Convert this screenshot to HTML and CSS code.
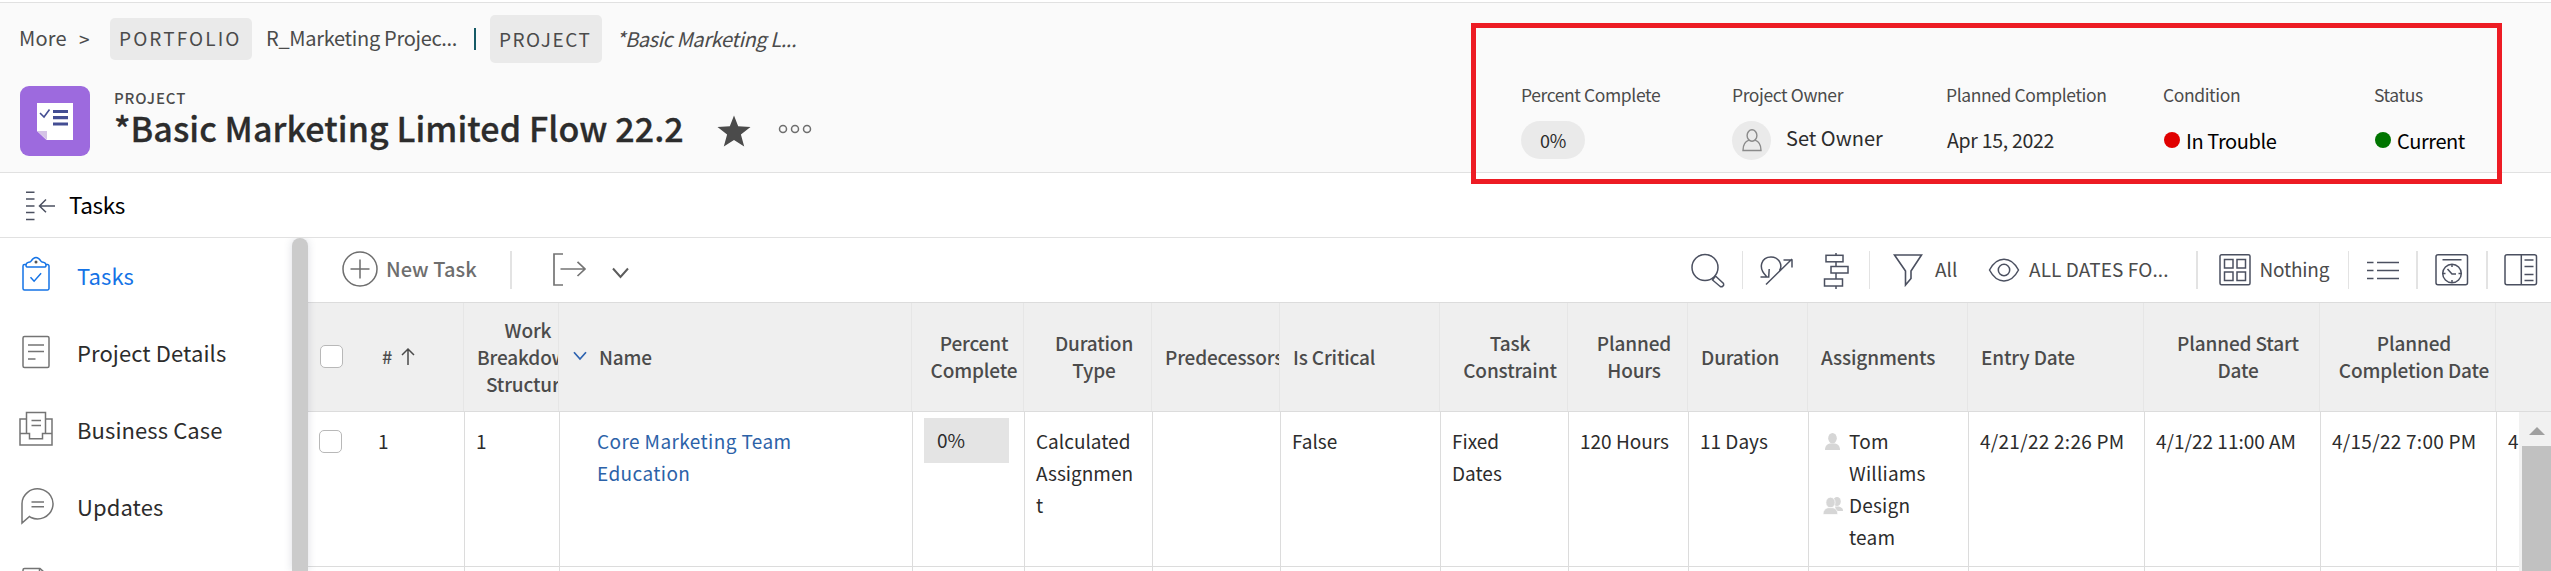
FILE: index.html
```html
<!DOCTYPE html>
<html lang="en">
<head>
<meta charset="utf-8">
<title>Tasks</title>
<link rel="stylesheet" href="styles.css">
</head>
<body>
<header class="header">
  <div class="lead">
    <nav class="crumbs">
      <span class="more">More</span><span class="gt">&gt;</span>
      <span class="pill">PORTFOLIO</span><span class="crumb">R_Marketing Projec...</span>
      <span class="bar"></span>
      <span class="pill tall">PROJECT</span><span class="crumb current">*Basic Marketing L...</span>
    </nav>
    <div class="titlebar">
      <svg class="logo" width="70" height="70" viewBox="0 0 70 70"><rect width="70" height="70" rx="9" fill="#9d6ade"/><path d="M17 17h36v37H26.500L17 45z" fill="#fff"/><path d="M17 45h10v9z" fill="#d5c3e6"/><path d="M20 27l4 4 5.500-7.500" fill="none" stroke="#444e93" stroke-width="1.600"/><path d="M33 25.500h15M33 31.700h15M33 38h15" stroke="#444e93" stroke-width="3.200"/></svg>
      <div class="names"><div class="kind">PROJECT</div><h1>*Basic Marketing Limited Flow 22.2</h1></div>
      <svg class="star" width="34" height="32" viewBox="0 0 34 32"><path d="M17 .5l4.200 10.800 12.300.6-9.600 7.700 3.300 11.800L17 25 6.800 31.400l3.300-11.800L.5 11.900l12.300-.6z" fill="#4b4b4b"/></svg>
      <svg class="dots" width="34" height="10" viewBox="0 0 34 10" fill="none" stroke="#6e6e6e" stroke-width="1.500"><circle cx="5" cy="5" r="3.500"/><circle cx="17" cy="5" r="3.500"/><circle cx="29" cy="5" r="3.500"/></svg>
    </div>
  </div>
  <div class="facts">
    <div><div class="label">Percent Complete</div><div class="value"><span class="pct">0%</span></div></div>
    <div><div class="label">Project Owner</div><div class="value"><span class="avatar"><svg width="20" height="23" viewBox="0 0 20 23" fill="none" stroke="#8a8a8a" stroke-width="1.400"><ellipse cx="10" cy="6.500" rx="4.900" ry="5.700"/><path d="M7 11.200C3 12.500 1 17 1 21.500h18c0-4.500-2-9-6-10.300"/></svg></span><span class="owner">Set Owner</span></div></div>
    <div><div class="label">Planned Completion</div><div class="value date">Apr 15, 2022</div></div>
    <div><div class="label">Condition</div><div class="value state"><i class="dot red"></i><span>In Trouble</span></div></div>
    <div><div class="label">Status</div><div class="value state"><i class="dot green"></i><span>Current</span></div></div>
  </div>
  <div class="highlight"></div>
</header>

<div class="section">
  <svg width="32" height="30" viewBox="0 0 32 30" fill="none" stroke="#4b5060" stroke-width="1.500"><path d="M1 1.200h8.500M1 8h8.500M1 15h8.500M1 21.500h8.500M1 28.500h8.500M14.500 15h15.500M21 8.500l-6.500 6.500 6.500 6.200"/></svg>
  <span>Tasks</span>
</div>

<div class="body">
  <aside class="side">
    <div class="item active"><svg width="36" height="36" viewBox="0 0 36 36" fill="none" stroke="#1473e6" stroke-width="1.500"><path d="M8 8.500H6.500a1.500 1.500 0 0 0-1.500 1.500v22.500A1.500 1.500 0 0 0 6.500 34h23a1.500 1.500 0 0 0 1.500-1.500V10a1.500 1.500 0 0 0-1.500-1.500H28M8 9.500c0-3 2-3.200 4-3.400 1.500 0 1.800-4.600 6-4.600s4.500 4.600 6 4.600c2 .2 4 .4 4 3.400 0 1-1 1.600-2 1.600H10c-1 0-2-.6-2-1.600zM12.500 21.200l3.600 4 7-8"/><circle cx="18" cy="6" r="1.500" fill="#555" stroke="none"/></svg><span>Tasks</span></div>
    <div class="item"><svg width="36" height="36" viewBox="0 0 36 36" fill="none" stroke="#747474" stroke-width="1.500"><rect x="5" y="2.500" width="26" height="31" rx="1.500"/><path d="M10 11h16M10 17.500h16M10 25h7.500"/></svg><span>Project Details</span></div>
    <div class="item"><svg width="36" height="36" viewBox="0 0 36 36" fill="none" stroke="#747474" stroke-width="1.500"><path d="M8.500 22.500V1.500h19v21M8.500 8H2v26h32V8h-6.500M2 22.500h9.500v5.300h13v-5.300H34M13.500 9.500H23M13.500 14.500H23"/></svg><span>Business Case</span></div>
    <div class="item"><svg width="36" height="36" viewBox="0 0 36 36" fill="none" stroke="#747474" stroke-width="1.500"><path d="M4 35V15.500a15.500 15 0 1 1 9 14L11.500 28.500zM13.500 14h12.500M13.500 18.700h12.500"/></svg><span>Updates</span></div>
    <div class="item cut"><svg width="36" height="12" viewBox="0 0 36 12" fill="none" stroke="#747474" stroke-width="1.500"><path d="M5 12V4a1.500 1.500 0 0 1 1.500-1.500H22l9 8V12"/><path d="M21.500 2.500v9H31"/></svg></div>
  </aside>
  <div class="scroll"></div>
  <main class="main">
    <div class="toolbar">
      <svg class="i-new" width="36" height="36" viewBox="0 0 36 36" fill="none" stroke="#6e6e6e" stroke-width="1.500"><circle cx="18" cy="18" r="17"/><path d="M18 8.500v19M8.500 18h19"/></svg>
      <span class="new">New Task</span>
      <i class="sep s1"></i>
      <svg class="i-exp" width="33" height="36" viewBox="0 0 33 36" fill="none" stroke="#747474" stroke-width="1.700"><path d="M10 2H1v31h9M7.500 17H32M24.500 9.800L32 17l-7.500 7"/></svg>
      <svg class="i-chev" width="17" height="12" viewBox="0 0 17 12" fill="none" stroke="#5c5c5c" stroke-width="2"><path d="M1 1.500l7.500 8.500L16 1.500"/></svg>
      <svg class="i-search" width="36" height="36" viewBox="0 0 36 36" fill="none" stroke="#4b5060" stroke-width="1.500"><circle cx="15" cy="15.500" r="13"/><path d="M22.500 28l3-4 8 7.500c1 2-1.500 4-3.300 3z"/></svg>
      <i class="sep s2"></i>
      <svg class="i-recalc" width="36" height="36" viewBox="0 0 36 36" fill="none" stroke="#4b5060" stroke-width="1.500"><path d="M7 31.500L33 6M24.500 7H33v7.500M20.500 17.700C24 12 20 4 12 4 3 4-2 14 7.500 23.500M1.500 24h8.200l.5-8"/></svg>
      <svg class="i-gantt" width="26" height="36" viewBox="0 0 26 36" fill="none" stroke="#4b5060" stroke-width="1.500"><path d="M13 0v2.500M13 8.500v5M13 20v6M13 33v3"/><rect x="3" y="2.300" width="17" height="6.500"/><rect x="8" y="13.500" width="17" height="6.500"/><rect x="1.500" y="26" width="18" height="7"/></svg>
      <i class="sep s3"></i>
      <svg class="i-filter" width="30" height="36" viewBox="0 0 30 36" fill="none" stroke="#4b5060" stroke-width="1.600"><path d="M1.500 3h27L18 19v7.500l-5.500 6.500V19z"/></svg>
      <span class="t-all">All</span>
      <svg class="i-eye" width="32" height="36" viewBox="0 0 32 36" fill="none" stroke="#4b5060" stroke-width="1.500"><path d="M1.500 18C9 3.500 23 3.500 30.500 18 23 32.500 9 32.500 1.500 18z"/><circle cx="16" cy="18" r="5.700"/></svg>
      <span class="t-dates">ALL DATES FO...</span>
      <i class="sep s4"></i>
      <svg class="i-grid" width="32" height="36" viewBox="0 0 32 36" fill="none" stroke="#4b5060" stroke-width="1.500"><rect x="1" y="2.800" width="30" height="30" rx="1.500"/><path d="M5.500 7.500h8.500v8.500H5.500zM18 7.500h8.500v8.500H18zM5.500 20h8.500v8.500H5.500zM18 20h8.500v8.500H18z"/></svg>
      <span class="t-nothing">Nothing</span>
      <i class="sep s5"></i>
      <svg class="i-list" width="32" height="36" viewBox="0 0 32 36" fill="none" stroke="#4b5060" stroke-width="1.500"><path d="M0 10.500h6.500M10 10.500h22M0 18.500h6.500M10 18.500h22M0 26.500h6.500M10 26.500h22"/></svg>
      <i class="sep s6"></i>
      <svg class="i-clock" width="34" height="36" viewBox="0 0 34 36" fill="none" stroke="#4b5060" stroke-width="1.500"><rect x="1" y="2.800" width="31.500" height="30" rx="2"/><path d="M7.500 7.800h19M12.500 17l4.500 5h4M17 12v3M17 28v3M7.500 21.500h3M23.500 21.500h3"/><circle cx="17" cy="21.500" r="9.300"/></svg>
      <i class="sep s7"></i>
      <svg class="i-panel" width="34" height="36" viewBox="0 0 34 36" fill="none" stroke="#4b5060" stroke-width="1.500"><rect x="1" y="2.800" width="31.500" height="30" rx="2"/><path d="M17.300 3v30M20.500 8h9M20.500 14.500h9M20.500 22.500h9M20.500 28.500h9"/></svg>
    </div>

    <div class="grid head">
      <div class="c numcell"><span class="check"></span><span class="hash">#</span><svg width="14" height="17" viewBox="0 0 14 17" fill="none" stroke="#4b4b4b" stroke-width="1.500"><path d="M7 17V1.200M1 7l6-6 6 6"/></svg></div>
      <div class="c mid wbs">Work<br>Breakdown<br>Structure</div>
      <div class="c name"><svg width="14" height="10" viewBox="0 0 14 10" fill="none" stroke="#2c62b0" stroke-width="1.700"><path d="M1 1.200l6 6.800 6-6.800"/></svg>Name</div>
      <div class="c mid">Percent<br>Complete</div>
      <div class="c mid">Duration<br>Type</div>
      <div class="c">Predecessors</div>
      <div class="c">Is Critical</div>
      <div class="c mid">Task<br>Constraint</div>
      <div class="c mid">Planned<br>Hours</div>
      <div class="c">Duration</div>
      <div class="c">Assignments</div>
      <div class="c">Entry Date</div>
      <div class="c mid">Planned Start<br>Date</div>
      <div class="c mid">Planned<br>Completion Date</div>
      <div class="c last"></div>
    </div>

    <div class="rows">
      <div class="grid row">
        <div class="c numcell"><span class="check"></span><span class="num">1</span></div>
        <div class="c">1</div>
        <div class="c link">Core Marketing Team<br>Education</div>
        <div class="c box"><span class="progress">0%</span></div>
        <div class="c">Calculated<br>Assignmen<br>t</div>
        <div class="c"></div>
        <div class="c">False</div>
        <div class="c">Fixed<br>Dates</div>
        <div class="c">120 Hours</div>
        <div class="c">11 Days</div>
        <div class="c people">
          <div class="person"><svg width="20" height="17" viewBox="0 0 20 17" fill="#d6d6d6"><ellipse cx="9.500" cy="5.300" rx="4.300" ry="5.300"/><path d="M2 17c0-4 2-5.800 5-6.500h5c3 .7 5 2.500 5 6.500z"/></svg><span>Tom<br>Williams</span></div>
          <div class="person"><svg width="20" height="17" viewBox="0 0 20 17" fill="#d6d6d6"><ellipse cx="14" cy="4.500" rx="3.800" ry="4.500"/><path d="M12 9.500h4c3 1 4 2 4 4.500h-7z"/><g stroke="#fff" stroke-width=".7"><ellipse cx="7.500" cy="5.500" rx="4.600" ry="5.300"/><path d="M0 17.500c0-4 2-6 5-6.800h5c3 .8 4.800 2.800 4.800 6.800z"/></g></svg><span>Design<br>team</span></div>
        </div>
        <div class="c d1">4/21/22 2:26 PM</div>
        <div class="c">4/1/22 11:00 AM</div>
        <div class="c d1">4/15/22 7:00 PM</div>
        <div class="c last">4</div>
      </div>
      <div class="grid row next"><div class="c"></div><div class="c"></div><div class="c"></div><div class="c"></div><div class="c"></div><div class="c"></div><div class="c"></div><div class="c"></div><div class="c"></div><div class="c"></div><div class="c"></div><div class="c"></div><div class="c"></div><div class="c"></div><div class="c last"></div></div>
      <div class="vscroll"><i class="up"></i><i class="thumb"></i></div>
    </div>
  </main>
</div>
</body>
</html>
```
FILE: styles.css
```css
*{box-sizing:border-box}
body{margin:0;width:2551px;height:571px;overflow:hidden;background:#fff;color:#2c2c2c;font:19px/32px "Noto Sans CJK SC","Noto Sans",sans-serif;display:flex;flex-direction:column}
svg{display:block;flex:none;overflow:visible}
span{white-space:nowrap}

.header{position:relative;height:173px;flex:none;display:flex;background:#fafafa;border-bottom:1px solid #e1e1e1}
.header::before{content:"";position:absolute;left:0;right:0;top:0;height:2px;background:#fff;border-bottom:1px solid #e1e1e1}
.lead{width:1521px;flex:none}
.crumbs{height:78px;display:flex;align-items:center;color:#4b4b4b;padding-left:19px;font-size:20px;line-height:39px}
.crumbs span{flex:none}
.more{padding-bottom:3px;width:60px;letter-spacing:.200px}
.gt{padding-bottom:1px;width:31px;font-size:19px}
.pill{width:142px;height:42px;background:#eaeaea;border-radius:5px;padding-left:9px;font-size:19px;letter-spacing:2.100px;line-height:39px}
.pill.tall{width:112px;height:48px;line-height:47px;letter-spacing:1.500px;padding-left:9px}
.crumb{width:222px;padding:0 0 3px 14px;letter-spacing:-.300px}
.crumb.current{font-style:italic;letter-spacing:-.400px;padding:0 0 1px 14px}
.bar{width:2px;height:22px;background:#155a66;margin-right:14px}
.titlebar{display:flex;padding-left:20px}
.logo{margin-top:8px}
.names{width:627px;flex:none;padding:9px 0 0 24px}
.kind{font-size:15px;line-height:21px;letter-spacing:.900px;font-weight:500;color:#4b4b4b}
h1{margin:0;font-size:34px;line-height:40px;font-weight:500;letter-spacing:.080px;white-space:nowrap;color:#2c2c2c;-webkit-text-stroke:.300px}
.star{margin:37px 0 0 0}
.dots{margin:46px 0 0 27px}

.facts{display:grid;grid-template-columns:211px 214px 217px 211px 150px;padding-top:84px}
.label{font-size:17.500px;line-height:22px;letter-spacing:-.400px;color:#4b4b4b}
.value{display:flex;align-items:center;height:38px;margin-top:15px;font-size:20px;letter-spacing:-.400px;white-space:nowrap}
.pct{width:64px;height:38px;border-radius:19px;background:#eaeaea;text-align:center;font-size:18px;line-height:38px}
.avatar{width:39px;height:39px;border-radius:50%;background:#eaeaea;display:flex;align-items:center;justify-content:center}
.owner{margin-left:15px;letter-spacing:0;padding-bottom:4px}
.date{font-size:19.500px;letter-spacing:-.300px;padding-left:1px}
.state{color:#000}
.state span{padding-top:2px;margin-left:6px}
.dot{width:16px;height:16px;border-radius:50%;margin-left:1px}
.red{background:#e00000}
.green{background:#007500}
.highlight{position:absolute;left:1471px;top:23px;width:1031px;height:161px;border:5px solid #ed1c24;z-index:2}

.section{height:65px;flex:none;border-bottom:1px solid #e1e1e1;display:flex;align-items:center;padding-left:25px;color:#000;font-size:22.500px}
.section svg{margin-top:2px}
.section span{margin-left:12px;letter-spacing:-.400px;padding-bottom:2px}

.body{flex:1;min-height:0;display:flex;overflow:hidden}
.side{width:292px;flex:none;overflow:hidden;font-size:22px;color:#2c2c2c}
.item{height:77px;display:flex;align-items:center;padding-left:18px}
.item span{margin-left:23px;padding-bottom:3px;letter-spacing:.100px}
.item svg{margin-top:-3px}
.side .active{color:#1473e6}
.item.active svg{margin-top:-5px}
.item.cut{height:25px;align-items:flex-end}
.item.cut svg{margin:0 0 -7px}
.scroll{width:16px;flex:none;background:#cbcbcb;border-radius:8px 8px 0 0;box-shadow:0 0 8px rgba(60,70,100,.18);z-index:1}
.main{flex:1;min-width:0;overflow:hidden}

.toolbar{height:65px;border-bottom:1px solid #dcdcdc;display:flex;align-items:flex-start;padding-top:14px;color:#4b4b4b;line-height:34px}
.toolbar span{flex:none}
.sep{width:1.500px;height:38px;background:#e3e3e3;flex:none;margin-top:-1px}
.i-new{margin:-1px 0 0 34px}
.new{width:99px;margin:0 25px 0 8px;font-size:20px;font-weight:500;color:#6e6e6e;letter-spacing:.050px}
.s1{width:2px}
.i-exp{margin-left:41px}
.i-chev{margin:15px 0 0 26px}
.i-search{margin-left:1061px}
.s2{margin-left:16px;width:1px}
.i-recalc{margin:1px 0 0 16px}
.i-gantt{margin:1px 0 0 28px}
.s3{margin-left:20px;width:1px}
.i-filter{margin-left:23px}
.t-all{margin-left:12px;width:54px}
.i-eye{margin-left:-1px}
.t-dates{margin-left:9px;width:167px;letter-spacing:.100px}
.i-grid{margin-left:21px}
.t-nothing{margin-left:9px;width:88px;letter-spacing:-.200px}
.s5{width:1px}
.i-list{margin-left:18px}
.s6{margin-left:17px;width:2px}
.i-clock{margin-left:17px}
.s7{margin-left:17px;width:2px}
.i-panel{margin-left:16px}

.grid{display:grid;grid-template-columns:157px 95px 353px 112px 128px 128px 160px 128px 120px 120px 160px 176px 176px 176px 54px}
.head{grid-template-columns:156px 95px 353px 112px 128px 128px 160px 128px 120px 120px 160px 176px 176px 176px 55px;height:109px;background:#efefef;border-bottom:1px solid #dcdcdc;color:#4b4b4b;line-height:27px;font-weight:500;letter-spacing:-.150px}
.head .c{border-right:1px solid #e6e6e6;display:flex;align-items:center;padding:0 0 2px 13px;overflow:hidden;white-space:nowrap}
.head .mid{justify-content:center;text-align:center;padding-left:13px}
.head .wbs{justify-content:flex-start;padding-left:13px}
.head .name{padding-left:14px}
.head .name svg{margin-right:12px}
.check{width:23px;height:23px;border:1.500px solid #b8b8b8;border-radius:5px;background:#fff;flex:none}
.head .numcell{padding-left:12px}
.hash{margin:0 9px 0 39px;font-size:18px}
.rows{position:relative}
.row{height:155px;border-bottom:1px solid #dcdcdc}
.row .c{border-right:1px solid #dcdcdc;padding:13px 0 0 11px;overflow:hidden;white-space:nowrap}
.row .numcell{display:flex;padding-left:11px}
.row .check{margin-top:5px}
.num{margin-left:36px}
.row .link{padding-left:37px;color:#2c62a8;letter-spacing:.400px}
.row .box{padding:6px 0 0 11px}
.progress{display:block;width:85px;height:45px;background:#e4e4e4;padding:7px 0 0 13px;line-height:30px;font-size:19px}
.person{display:flex}
.person svg{margin:8px 6px 0 3px}
.people{letter-spacing:.200px}
.d1{letter-spacing:.270px}
.row.next{height:4px;border-bottom:0}
.row.next .c{padding:0}
.row .last,.head .last{border-right:0}
.vscroll{position:absolute;right:0;top:0;width:32px;height:159px;background:#f1f1f1}
.up{position:absolute;left:10px;top:15px;border:8px solid transparent;border-top:0;border-bottom:8px solid #a0a0a0}
.thumb{position:absolute;left:3px;right:0;top:34px;bottom:0;background:#c1c1c1}
```
